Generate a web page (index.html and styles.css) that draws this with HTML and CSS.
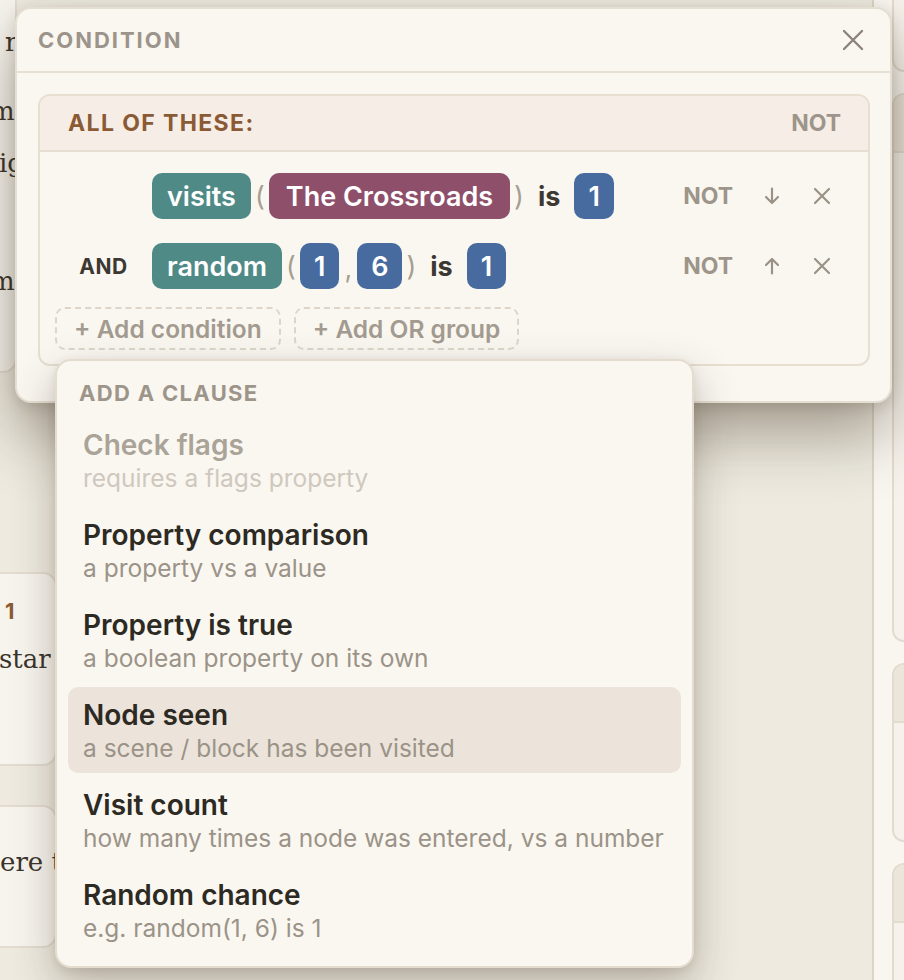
FILE: index.html
```html
<!DOCTYPE html>
<html lang="en">
<head>
    <meta charset="UTF-8">
    <meta name="viewport" content="width=device-width, initial-scale=1.0">
    <title>Condition editor</title>
    <link rel="stylesheet" href="styles.css">
</head>
<body>
    <!-- Story canvas (behind the dialog) -->
    <div class="canvas">
        <div class="node node-a">
            <p class="line">r</p>
            <p class="line gap-a cut-m">m</p>
            <p class="line cut-i">ig</p>
            <p class="line gap-b cut-m">m</p>
        </div>
        <div class="node node-b">
            <div class="node-label">1</div>
            <p class="line cut-s">star</p>
        </div>
        <div class="node node-c">
            <p class="line cut-e">ere t</p>
        </div>
    </div>

    <aside class="sidebar">
        <div class="side-card card-1"><div class="side-head"></div></div>
        <div class="side-card card-2"><div class="side-head"></div></div>
        <div class="side-card card-3"><div class="side-head"></div></div>
        <div class="side-card card-4"><div class="side-head"></div></div>
    </aside>

    <!-- Condition dialog -->
    <div class="modal">
        <div class="modal-head">
            <span class="modal-title">CONDITION</span>
            <button class="icon-btn close-btn" aria-label="Close">
                <svg width="22" height="22" viewBox="0 0 22 22"><path d="M2 2 L20 20 M20 2 L2 20" stroke="currentColor" stroke-width="2.4" stroke-linecap="round" fill="none"/></svg>
            </button>
        </div>
        <div class="modal-body">
            <div class="group">
                <div class="group-head">
                    <span class="group-title">ALL OF THESE:</span>
                    <span class="not-label">NOT</span>
                </div>
                <div class="group-body">
                    <div class="row">
                        <span class="connector"></span>
                        <span class="chip chip-fn">visits</span>
                        <span class="paren">(</span>
                        <span class="chip chip-node">The Crossroads</span>
                        <span class="paren">)</span>
                        <span class="op">is</span>
                        <span class="chip chip-num">1</span>
                        <div class="row-tools">
                            <span class="not-label">NOT</span>
                            <button class="icon-btn" aria-label="Move down">
                                <svg width="18" height="18" viewBox="0 0 18 18"><path d="M9 1.5 V16 M3 10 L9 16 L15 10" stroke="currentColor" stroke-width="2.2" stroke-linecap="round" stroke-linejoin="round" fill="none"/></svg>
                            </button>
                            <button class="icon-btn" aria-label="Remove">
                                <svg width="18" height="18" viewBox="0 0 18 18"><path d="M2 2 L16 16 M16 2 L2 16" stroke="currentColor" stroke-width="2.2" stroke-linecap="round" fill="none"/></svg>
                            </button>
                        </div>
                    </div>
                    <div class="row">
                        <span class="connector">AND</span>
                        <span class="chip chip-fn">random</span>
                        <span class="paren">(</span>
                        <span class="chip chip-num">1</span>
                        <span class="comma">,</span>
                        <span class="chip chip-num">6</span>
                        <span class="paren">)</span>
                        <span class="op">is</span>
                        <span class="chip chip-num">1</span>
                        <div class="row-tools">
                            <span class="not-label">NOT</span>
                            <button class="icon-btn" aria-label="Move up">
                                <svg width="18" height="18" viewBox="0 0 18 18"><path d="M9 16.5 V2 M3 8 L9 2 L15 8" stroke="currentColor" stroke-width="2.2" stroke-linecap="round" stroke-linejoin="round" fill="none"/></svg>
                            </button>
                            <button class="icon-btn" aria-label="Remove">
                                <svg width="18" height="18" viewBox="0 0 18 18"><path d="M2 2 L16 16 M16 2 L2 16" stroke="currentColor" stroke-width="2.2" stroke-linecap="round" fill="none"/></svg>
                            </button>
                        </div>
                    </div>
                    <div class="add-row">
                        <button class="add-btn">+ Add condition</button>
                        <button class="add-btn">+ Add OR group</button>
                    </div>
                </div>
            </div>
        </div>
    </div>

    <!-- Clause menu -->
    <div class="menu">
        <div class="menu-head">ADD A CLAUSE</div>
        <div class="menu-item disabled">
            <div class="item-title">Check flags</div>
            <div class="item-desc">requires a flags property</div>
        </div>
        <div class="menu-item">
            <div class="item-title">Property comparison</div>
            <div class="item-desc">a property vs a value</div>
        </div>
        <div class="menu-item">
            <div class="item-title">Property is true</div>
            <div class="item-desc">a boolean property on its own</div>
        </div>
        <div class="menu-item active">
            <div class="item-title">Node seen</div>
            <div class="item-desc">a scene / block has been visited</div>
        </div>
        <div class="menu-item">
            <div class="item-title">Visit count</div>
            <div class="item-desc">how many times a node was entered, vs a number</div>
        </div>
        <div class="menu-item">
            <div class="item-title">Random chance</div>
            <div class="item-desc">e.g. random(1, 6) is 1</div>
        </div>
    </div>
</body>
</html>
```

FILE: styles.css
```css
* {
    box-sizing: border-box;
}
body {
    margin: 0;
    width: 904px;
    height: 980px;
    overflow: hidden;
    position: relative;
    display: flex;
    background: #eeeae0;
    font-family: Inter, "Noto Sans", sans-serif;
    color: #2d2923;
}
button {
    font-family: inherit;
    background: none;
    border: none;
    padding: 0;
    cursor: pointer;
}

/* canvas nodes */
.canvas {
    flex: 1;
    position: relative;
}
.node {
    position: absolute;
    left: -20px;
    overflow: hidden;
    background: #f7f4ee;
    border: 2px solid #e3dccf;
    border-radius: 14px;
    font-family: "DejaVu Serif", "Liberation Serif", serif;
    font-size: 26px;
    line-height: 52px;
    color: #3a342c;
    padding-left: 23px;
}
.node p {
    margin: 0;
    white-space: nowrap;
}
.node-a {
    top: -40px;
    width: 37px;
    height: 413px;
    padding-top: 54px;
}
.node-b {
    top: 572px;
    width: 77px;
    height: 194px;
    padding-top: 22px;
}
.node-c {
    top: 805px;
    width: 77px;
    height: 143px;
    padding-top: 29px;
}
.node-label {
    font-family: Inter, sans-serif;
    font-size: 22px;
    font-weight: 700;
    line-height: 30px;
    color: #8b5b34;
}
.node .gap-a { margin-top: 17px; }
.node .gap-b { margin-top: 66px; }
.node .cut-m { margin-left: -15px; }
.node .cut-i { margin-left: -6px; }
.node .cut-s { margin-top: 7px; margin-left: -6px; }
.node .cut-e { margin-left: -5px; }

/* right sidebar */
.sidebar {
    width: 32px;
    flex: none;
    background: #f9f6f0;
    border-left: 2px solid #ddd5c8;
    padding-left: 18px;
    display: flex;
    flex-direction: column;
    gap: 21px;
    overflow: hidden;
}
.side-card {
    flex: none;
    background: #f6f2eb;
    border: 2px solid #e3dbcf;
    border-right: 0;
    border-radius: 14px 0 0 14px;
    overflow: hidden;
}
.side-head {
    height: 58px;
    background: #ece5da;
    border-bottom: 2px solid #e3dbcf;
}
.card-1 { height: 170px; margin-top: -98px; }
.card-2 { height: 549px; }
.card-3 { height: 179px; }
.card-4 { height: 200px; }

/* dialog */
.modal {
    position: absolute;
    left: 15px;
    top: 7px;
    width: 877px;
    background: #faf7f1;
    border: 2px solid #e5ded2;
    border-radius: 16px;
    box-shadow: 0 30px 64px rgba(55, 44, 24, 0.42), 0 4px 14px rgba(55, 44, 24, 0.14);
}
.modal-head {
    height: 64px;
    display: flex;
    align-items: center;
    justify-content: space-between;
    padding: 0 26px 0 21px;
    border-bottom: 2px solid #e8e0d4;
}
.modal-title {
    font-size: 22px;
    font-weight: 700;
    letter-spacing: 0.09em;
    color: #9c948a;
}
.icon-btn {
    color: #958d82;
    display: flex;
    align-items: center;
    justify-content: center;
}
.close-btn {
    color: #8c8479;
    width: 22px;
    height: 22px;
}
.modal-body {
    padding: 21px 20px 35px 21px;
}
.group {
    border: 2px solid #e6dfd2;
    border-radius: 12px;
    overflow: hidden;
}
.group-head {
    height: 56px;
    background: #f5ede6;
    border-bottom: 2px solid #e6dfd2;
    display: flex;
    align-items: center;
    justify-content: space-between;
    padding: 0 27px 0 28px;
}
.group-title {
    font-size: 23px;
    font-weight: 700;
    letter-spacing: 0.06em;
    color: #8a5a34;
}
.not-label {
    font-size: 23px;
    font-weight: 700;
    color: #9d958a;
}
.group-body {
    padding: 9px 15px 14px;
}
.row {
    height: 70px;
    display: flex;
    align-items: center;
}
.connector {
    width: 97px;
    flex: none;
    text-align: center;
    font-size: 21px;
    font-weight: 700;
    letter-spacing: 0.03em;
    color: #3d3831;
}
.chip {
    height: 46px;
    display: flex;
    align-items: center;
    padding: 0 15px;
    border-radius: 10px;
    font-size: 27px;
    font-weight: 600;
    color: #fff;
}
.chip-fn { background: #4f8a87; }
.chip-node { background: #8e4f6b; padding: 0 17px; }
.chip-num { background: #476b9f; padding: 0 14px; }
.paren, .comma {
    font-size: 27px;
    color: #a69e93;
    margin: 0 4px;
}
.comma {
    margin: 0 5px;
    align-self: flex-end;
    padding-bottom: 16px;
}
.op {
    font-size: 27px;
    font-weight: 700;
    color: #3d3831;
    margin: 0 14px 0 10px;
}
.row-tools {
    margin-left: auto;
    margin-right: 13px;
    display: flex;
    align-items: center;
}
.row-tools .not-label {
    margin-right: 21px;
}
.row-tools .icon-btn {
    width: 36px;
    height: 36px;
    color: #9a9287;
}
.row-tools .icon-btn + .icon-btn {
    margin-left: 14px;
}
.add-row {
    display: flex;
    gap: 13px;
    margin-top: 6px;
}
.add-btn {
    height: 43px;
    padding: 0 17px;
    border: 2px dashed #ddd5c9;
    border-radius: 10px;
    font-size: 24.5px;
    font-weight: 600;
    color: #a39b90;
}

/* clause menu */
.menu {
    position: absolute;
    left: 55px;
    top: 359px;
    width: 639px;
    height: 609px;
    background: #faf7f0;
    border: 2px solid #e4dccf;
    border-radius: 16px;
    padding: 10px 11px 12px;
    box-shadow: 0 18px 44px rgba(55, 44, 24, 0.3), 0 3px 10px rgba(55, 44, 24, 0.1);
}
.menu-head {
    padding: 10px 11px 12px;
    font-size: 22px;
    line-height: 24px;
    font-weight: 700;
    letter-spacing: 0.06em;
    color: #9d958a;
}
.menu-item {
    height: 86px;
    margin-bottom: 4px;
    padding: 12px 15px 10px;
    border-radius: 10px;
}
.menu-item.active {
    background: #ece4da;
}
.item-title {
    font-size: 28px;
    line-height: 32px;
    font-weight: 600;
    color: #2d2923;
}
.item-desc {
    margin-top: 2px;
    font-size: 24.5px;
    line-height: 30px;
    color: #9b9388;
}
.menu-item.disabled .item-title {
    color: #aaa398;
}
.menu-item.disabled .item-desc {
    color: #cfc8be;
}
```
